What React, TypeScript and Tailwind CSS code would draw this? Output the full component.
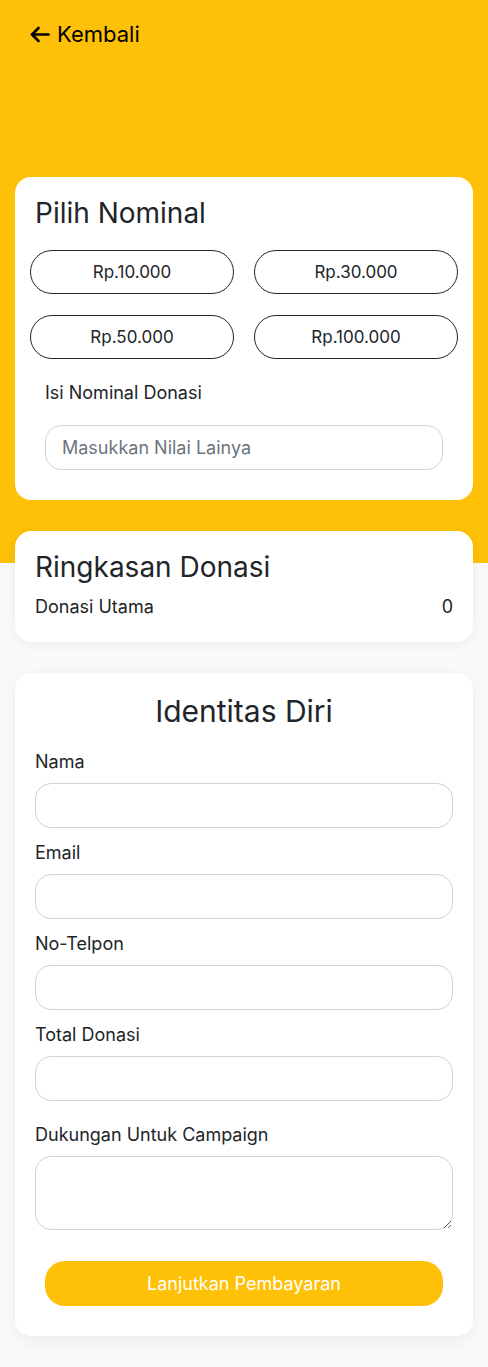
const nominals = ["Rp.10.000", "Rp.30.000", "Rp.50.000", "Rp.100.000"];
const fields = ["Nama", "Email", "No-Telpon", "Total Donasi"];

function BackArrow() {
  return (
    <svg width="20" height="17" viewBox="0 0 20 17" fill="none" stroke="currentColor" strokeWidth="2.6" strokeLinecap="round" strokeLinejoin="round">
      <path d="M18.5 8.5H2" />
      <path d="M8.5 2 2 8.5 8.5 15" />
    </svg>
  );
}

export default function App() {
  return (
    <div className="min-h-screen bg-[linear-gradient(#ffc107_563px,#f8f9fa_563px)] pb-[31px] font-['Inter',sans-serif] text-[#212529]">
      {/* Header */}
      <div className="px-[30px] pt-[20px] h-[177px]">
        <a href="#" className="flex items-center gap-[7px] text-[22px] leading-[28px] text-black">
          <BackArrow />
          Kembali
        </a>
      </div>

      <div className="px-[15px] flex flex-col gap-[31px]">
        {/* Nominal */}
        <div className="bg-white rounded-[16px] px-[15px] pt-[19px] pb-[30px]">
          <h2 className="text-[28px] px-[5px] mb-[20px] leading-[34px]">Pilih Nominal</h2>
          <div className="grid grid-cols-2 gap-x-[20px] gap-y-[21px]">
            {nominals.map((n) => (
              <button
                key={n}
                className="h-[44px] pt-[2px] rounded-full border border-[#212529] bg-white text-[17px]"
              >
                {n}
              </button>
            ))}
          </div>
          <div className="px-[15px] mt-[21px]">
            <label className="block text-[18px] mb-[19px] leading-[26px]">Isi Nominal Donasi</label>
            <input
              className="w-full h-[45px] rounded-[16px] border border-[#ced4da] px-[16px] text-[18px] placeholder:text-[#6c757d] outline-none"
              placeholder="Masukkan Nilai Lainya"
            />
          </div>
        </div>

        {/* Ringkasan */}
        <div className="bg-white rounded-[16px] px-[20px] pt-[19px] pb-[22px] shadow-[0_2px_12px_rgba(0,0,0,0.06)]">
          <h2 className="text-[28px] leading-[34px] mb-[10px]">Ringkasan Donasi</h2>
          <div className="flex justify-between text-[18px] leading-[26px]">
            <span>Donasi Utama</span>
            <span>0</span>
          </div>
        </div>

        {/* Identitas */}
        <div className="bg-white rounded-[16px] px-[20px] pt-[20px] pb-[30px] shadow-[0_4px_16px_rgba(0,0,0,0.06)]">
          <h2 className="text-[30px] leading-[36px] text-center mb-[20px]">Identitas Diri</h2>
          {fields.map((f) => (
            <div key={f} className="mb-[12px]">
              <label className="block text-[18px] leading-[26px] mb-[8px]">{f}</label>
              <input className="w-full h-[45px] rounded-[16px] border border-[#ced4da] px-[16px] text-[18px] outline-none" />
            </div>
          ))}
          <div className="mt-[21px]">
            <label className="block text-[18px] leading-[26px] mb-[8px]">Dukungan Untuk Campaign</label>
            <textarea className="block w-full h-[74px] rounded-[16px] border border-[#ced4da] px-[16px] text-[18px] outline-none" />
          </div>
          <div className="px-[10px] mt-[31px]">
            <button className="w-full h-[45px] rounded-[20px] bg-[#ffc107] text-white text-[18px]">
              Lanjutkan Pembayaran
            </button>
          </div>
        </div>
      </div>
    </div>
  );
}
